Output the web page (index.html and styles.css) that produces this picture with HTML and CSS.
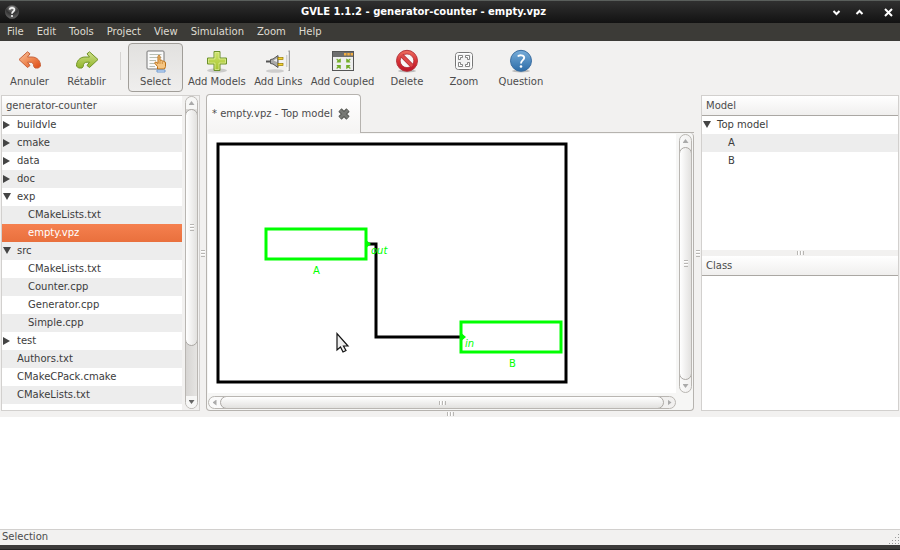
FILE: index.html
```html
<!DOCTYPE html>
<html lang="en">
<head>
<meta charset="utf-8">
<title>GVLE 1.1.2 - generator-counter - empty.vpz</title>
<link rel="stylesheet" href="styles.css">
</head>
<body>
<header class="titlebar">
  <svg class="app-icon" viewBox="0 0 16 16" aria-hidden="true">
    <defs><radialGradient id="orb" cx="50%" cy="15%" r="85%"><stop offset="0" stop-color="#999"/><stop offset="0.55" stop-color="#333"/><stop offset="1" stop-color="#666"/></radialGradient></defs>
    <circle cx="8" cy="8" r="6.6" fill="url(#orb)" stroke="#555" stroke-width=".6"/>
    <path d="M5.6 5.6C5.8 3.2 10.4 3.2 10.4 5.7C10.4 7.5 8.1 7.5 8 9.7" fill="none" stroke="#f2f2f2" stroke-width="1.7"/>
    <circle cx="8" cy="12" r="1.1" fill="#f2f2f2"/>
  </svg>
  <h1 class="title">GVLE 1.1.2 - generator-counter - empty.vpz</h1>
  <div class="window-buttons">
    <button class="window-button" aria-label="Minimize"><svg viewBox="0 0 9 9"><path d="M1.5 3L4.500 6L7.500 3" /></svg></button>
    <button class="window-button" aria-label="Maximize"><svg viewBox="0 0 9 9"><path d="M1.500 6L4.500 3L7.500 6" /></svg></button>
    <button class="window-button close" aria-label="Close"><svg viewBox="0 0 9 9"><path d="M1 1L8 8M8 1L1 8"/></svg></button>
  </div>
</header>

<nav class="menubar">
  <button>File</button><button>Edit</button><button>Tools</button><button>Project</button><button>View</button><button>Simulation</button><button>Zoom</button><button>Help</button>
</nav>

<div class="toolbar" role="toolbar">
  <button class="tool">
    <svg class="icon" viewBox="0 0 24 24"><defs><linearGradient id="undo" x2="1" y2="1"><stop offset="0" stop-color="#f7c4a0"/><stop offset=".5" stop-color="#ef8b55"/><stop offset="1" stop-color="#dd4814"/></linearGradient></defs>
      <path d="M1 10.500L9.500 2.800L12 4.800L9.500 8H14C19.500 8 22.700 12.500 22.500 17L20.500 19H17L15.800 17.500C15.600 14.500 14.500 13.200 12 13.200H9.500L12 16.500L9.500 18.500Z" fill="url(#undo)" stroke="#c8623a" stroke-linejoin="round"/></svg>
    <span>Annuler</span>
  </button>
  <button class="tool">
    <svg class="icon" viewBox="0 0 24 24"><defs><linearGradient id="redo" x2="0" y2="1"><stop offset="0" stop-color="#cfe08a"/><stop offset="1" stop-color="#91b52b"/></linearGradient></defs>
      <path d="M23 10.500L14.500 2.800L12 4.800L14.500 8H10C4.500 8 1.300 12.500 1.500 17L3.500 19H7L8.200 17.500C8.400 14.500 9.500 13.200 12 13.200H14.500L12 16.500L14.500 18.500Z" fill="url(#redo)" stroke="#719426" stroke-linejoin="round"/></svg>
    <span>Rétablir</span>
  </button>
  <span class="tool-separator"></span>
  <button class="tool pressed" aria-pressed="true">
    <svg class="icon" viewBox="0 0 24 24"><rect x="3" y="2" width="17" height="18" rx="1" fill="#fafafa" stroke="#777"/><path d="M5.500 5.500H17.500M5.500 8.500H17.500M5.500 11.500H12M5.500 14.500H11M5.500 17.500H11" stroke="#b7beb3" stroke-width="1.200"/>
      <path d="M13.500 20V17.500L11 14.500C10.300 12.800 12 12.500 14 14.500V7.500C14 6 16 6 16 7.500V11.500C17 10.800 18 11.200 18.300 12C19.400 11.500 20.100 12.300 20.200 13C21 12.500 21.600 13 21.500 14V17.500L20.500 20Z" fill="#f5c582" stroke="#b96e13"/><path d="M16 12V15M18.300 12.500V15" stroke="#b96e13" stroke-width=".6"/><path d="M13 21H21V23H13Z" fill="#dbeaff" stroke="#6e9ad0"/></svg>
    <span>Select</span>
  </button>
  <button class="tool">
    <svg class="icon" viewBox="0 0 24 24"><ellipse cx="12" cy="21.500" rx="10" ry="2.200" fill="#aaa" opacity=".55"/><defs><linearGradient id="plus" x2="0" y2="1"><stop offset="0" stop-color="#cee56b"/><stop offset="1" stop-color="#a5c32e"/></linearGradient></defs><path d="M9 2.500H15V9H21.500V15H15V21.500H9V15H2.500V9H9Z" fill="url(#plus)" stroke="#6b902b" stroke-linejoin="round"/><path d="M10 3.500H14V10H20.500V14H14V20.500H10V14H3.500V10H10Z" fill="none" stroke="#e1ee9e" stroke-width=".7"/></svg>
    <span>Add Models</span>
  </button>
  <button class="tool">
    <svg class="icon" viewBox="0 0 24 24"><ellipse cx="9" cy="22" rx="9" ry="1.800" fill="#aaa" opacity=".5"/><path d="M0 12.500H5" stroke="#555" stroke-width="2"/><path d="M4.500 10.500L7 10L12 6.500V18.500L7 15L4.500 14.500Z" fill="#aaa" stroke="#555"/><path d="M7.500 11.500L11 9.500V13Z" fill="#eee"/><rect x="12" y="8.500" width="5" height="2" fill="#f4d42e" stroke="#967900" stroke-width=".7"/><rect x="12" y="14.500" width="5" height="2" fill="#f4d42e" stroke="#967900" stroke-width=".7"/><path d="M21 6V18" stroke="#aaa"/><path d="M23.200 1.500V22" stroke="#999" stroke-width="1.500"/><path d="M22 3V21" stroke="#fff" stroke-width="1"/></svg>
    <span>Add Links</span>
  </button>
  <button class="tool">
    <svg class="icon" viewBox="0 0 24 24"><rect x="1.500" y="2.500" width="21" height="19" fill="#eee" stroke="#555"/><path d="M2 3H22V8H2Z" fill="#6e6e6e"/><path d="M13 4H15.500V6.500H13ZM16.300 4H18.800V6.500H16.300ZM19.600 4H22V6.500H19.600Z" fill="#f3ae41"/><g fill="#73ac28"><path d="M6 9.500L7.300 10.800L9.800 9.500V13.500H5.500L6.500 11.800L5.300 10.500ZM19 9.500L17.500 10.800L15.200 9.500V13.500H19.500L18.300 11.800L19.700 10.500Z"/><path d="M6 20L7.300 18.700L9.800 20V16H5.500L6.500 17.700L5.300 19ZM19 20L17.500 18.700L15.200 20V16H19.500L18.300 17.700L19.700 19Z"/></g></svg>
    <span>Add Coupled</span>
  </button>
  <button class="tool">
    <svg class="icon" viewBox="0 0 24 24"><defs><linearGradient id="stop" x2="0" y2="1"><stop offset="0" stop-color="#ed7061"/><stop offset=".5" stop-color="#d93336"/><stop offset="1" stop-color="#b91428"/></linearGradient></defs><ellipse cx="12" cy="22" rx="9" ry="1.500" fill="#bbb"/><circle cx="12" cy="11.800" r="10.500" fill="url(#stop)" stroke="#b5343b"/><circle cx="12" cy="11.800" r="6.800" fill="#f8f8f8" stroke="#a52a35" stroke-width=".7"/><path d="M6.800 6.600L17.200 17" stroke="#b52e38" stroke-width="4.200"/><path d="M6.800 6.600L17.200 17" stroke="#dc4a49" stroke-width="2.800"/></svg>
    <span>Delete</span>
  </button>
  <button class="tool">
    <svg class="icon" viewBox="0 0 24 24"><rect x="3.500" y="3.500" width="17" height="17" rx="3" fill="#f2f2f2" stroke="#777"/><rect x="4.500" y="4.500" width="15" height="15" rx="2" fill="none" stroke="#fff"/><g fill="#fff" stroke="#777" stroke-width=".9"><path d="M6.500 6.500H10.500V8.500H8.500V10.500H6.500ZM13.500 6.500H17.500V10.500H15.500V8.500H13.500Z"/><path d="M6.500 13.500H8.500V15.500H10.500V17.500H6.500ZM17.500 13.500H15.500V15.500H13.500V17.500H17.500Z"/></g></svg>
    <span>Zoom</span>
  </button>
  <button class="tool">
    <svg class="icon" viewBox="0 0 24 24"><defs><linearGradient id="help" x2="0" y2="1"><stop offset="0" stop-color="#78add9"/><stop offset="1" stop-color="#2c6ca8"/></linearGradient></defs><ellipse cx="12" cy="22" rx="9" ry="1.500" fill="#bbb"/><circle cx="12" cy="11.800" r="10.500" fill="url(#help)" stroke="#386ca0"/><path d="M8.800 7.500C10 5.900 15.200 5.600 15.200 8.800C15.200 11.200 12 11.200 12 14.500" fill="none" stroke="#fff" stroke-width="1.900"/><circle cx="12" cy="17.500" r="1.300" fill="#fff"/></svg>
    <span>Question</span>
  </button>
</div>

<main class="workspace">
  <section class="files">
    <div class="list">
      <h2 class="column-title">generator-counter</h2>
      <ul class="tree">
        <li class="closed">buildvle</li>
        <li class="closed">cmake</li>
        <li class="closed">data</li>
        <li class="closed">doc</li>
        <li class="open">exp</li>
        <li class="child">CMakeLists.txt</li>
        <li class="child selected">empty.vpz</li>
        <li class="open">src</li>
        <li class="child">CMakeLists.txt</li>
        <li class="child">Counter.cpp</li>
        <li class="child">Generator.cpp</li>
        <li class="child">Simple.cpp</li>
        <li class="closed">test</li>
        <li>Authors.txt</li>
        <li>CMakeCPack.cmake</li>
        <li>CMakeLists.txt</li>
      </ul>
    </div>
    <div class="scrollbar vertical files-scroll"><i class="arrow up"></i><div class="thumb"><i class="grip"></i></div><div class="trough"></div><i class="arrow down dark"></i></div>
  </section>
  <div class="handle"><i class="grip"></i></div>

  <section class="notebook">
    <div class="tabs">
      <div class="tab"><span>* empty.vpz - Top model</span>
        <button class="tab-close" aria-label="Close tab"><svg viewBox="0 0 14 14"><path d="M3 3L11 11M11 3L3 11" stroke="#555753" stroke-width="4.600"/><path d="M3 3L11 11M11 3L3 11" stroke="#777975" stroke-width="2.600"/></svg></button>
      </div>
      <div class="tab-rest"></div>
    </div>
    <div class="page">
      <div class="canvas">
        <svg width="468" height="259" viewBox="208 134 468 259">
          <g fill="none" stroke-width="3">
            <rect x="218" y="144" width="348" height="238" stroke="#000"/>
            <path d="M367 244H376V337H461" stroke="#000"/>
            <rect x="266" y="229" width="100" height="30" stroke="#0f0"/>
            <rect x="461" y="322" width="100" height="30" stroke="#0f0"/>
          </g>
          <path d="M366 240L371 244L366 248ZM460 332L466 337L460 342Z" fill="#0f0"/>
          <g class="labels"><text x="313" y="274">A</text><text x="509" y="367">B</text><text class="port" x="371" y="254">out</text><text class="port" x="465" y="347">in</text></g>
          <path d="M337 334V350.500L340.500 347L343.500 352.500L346.500 350.500L344 346.500L348 346Z" fill="#eee" stroke="#fff" stroke-width="3" opacity=".8"/>
          <path d="M337 333.500V350L340.500 347L343 352L346 350.500L343.500 346H348Z" fill="#eee" stroke="#111" stroke-width="1.200"/>
        </svg>
      </div>
      <div class="scrollbar vertical"><i class="arrow up"></i><div class="thumb"><i class="grip"></i></div><i class="arrow down"></i></div>
      <div class="scrollbar horizontal"><i class="arrow left"></i><div class="thumb"><i class="grip"></i></div><i class="arrow right"></i></div>
    </div>
  </section>
  <div class="handle"><i class="grip"></i></div>

  <aside class="models">
    <section class="model-list">
      <h2 class="column-title">Model</h2>
      <ul class="tree"><li class="open">Top model</li><li class="child">A</li><li class="child">B</li></ul>
    </section>
    <div class="handle row"><i class="grip"></i></div>
    <section class="class-list"><h2 class="column-title">Class</h2></section>
  </aside>
</main>
<div class="handle row"><i class="grip"></i></div>
<section class="console"></section>
<footer class="status"><span>Selection</span>
  <svg class="resize" viewBox="0 0 12 12"><path d="M10 1h1v1h-1zM7 4h1v1h-1zM10 4h1v1h-1zM4 7h1v1h-1zM7 7h1v1h-1zM10 7h1v1h-1zM1 10h1v1h-1zM4 10h1v1h-1zM7 10h1v1h-1zM10 10h1v1h-1z" fill="#999"/></svg>
</footer>
<div class="frame-bottom"></div>
</body>
</html>
```

FILE: styles.css
```css
* { box-sizing: border-box; }

body {
  margin: 0;
  min-height: 100vh;
  display: flex;
  flex-direction: column;
  background: #f2f1f0;
  color: #3c3c3c;
  font: 10px/18px "DejaVu Sans", sans-serif;
}

button {
  margin: 0;
  padding: 0;
  border: 0;
  background: none;
  color: inherit;
  font: inherit;
}

ul, h1, h2 { margin: 0; padding: 0; font: inherit; list-style: none; }
svg { display: block; }

.titlebar {
  display: grid;
  grid-template-columns: 30px 1fr 80px;
  align-items: center;
  height: 23px;
  padding: 0 7px 0 4px;
  border-top: 1px solid #5a5f5c;
  background: linear-gradient(#303030, #121212);
  color: #fff;
}
.app-icon { width: 16px; height: 16px; }
.title { text-align: center; font-weight: bold; }
.window-buttons { display: flex; justify-content: flex-end; align-items: center; gap: 14px; }
.window-button svg { width: 9px; height: 9px; fill: none; stroke: #fff; stroke-width: 2; }
.window-button.close { margin-left: 6px; }

.menubar {
  display: flex;
  gap: 13px;
  height: 18px;
  padding: 0 7px;
  background: #3c3b37;
  color: #dfdbd2;
}

.toolbar { display: flex; align-items: flex-start; height: 54px; padding: 2px 1px 0; }
.tool {
  min-width: 57px;
  padding: 4px 4px 0;
  height: 49px;
  border-radius: 4px;
  color: #4c4c4c;
}
.tool span { display: block; white-space: nowrap; }
.tool .icon { width: 24px; height: 24px; margin: 0 auto; }
.tool-separator { width: 1px; height: 28px; margin: 9px 7px 0 5px; background: #d5d3d1; }
.tool.pressed {
  min-width: 55px;
  margin-right: 1px;
  border: 1px solid #a19e99;
  background: linear-gradient(#e2e1df, #efeeed);
}

.workspace { display: grid; grid-template-columns: 200px 6px minmax(0, 1fr) 7px 199px; height: 316px; }

.files { display: flex; margin-left: 1px; border: 1px solid #d2d0ce; background: #f2f1f0; }
.list { flex: 1; background: #fff; margin-right: 3px; }
.column-title {
  height: 20px;
  padding-left: 4px;
  line-height: 20px;
  border-bottom: 1px solid #aaa7a3;
  background: linear-gradient(#fff, #f0efee);
  color: #4c4c4c;
}
.tree li { position: relative; height: 18px; padding-left: 15px; }
.tree li:nth-child(even) { background: #ededed; }
.tree li.child { padding-left: 26px; }
.tree li.selected { background: linear-gradient(#f5804f, #e9703d); color: #fff; }
.tree li.closed::before, .tree li.open::before {
  content: "";
  position: absolute;
  left: 1px;
  top: 5px;
  width: 7px;
  height: 8px;
  background: #444;
  clip-path: polygon(0 0, 100% 50%, 0 100%);
}
.tree li.open::before { width: 8px; height: 7px; clip-path: polygon(0 0, 100% 0, 50% 100%); }

.scrollbar {
  display: flex;
  border: 1px solid #b9b6b2;
  border-radius: 7px;
  background: linear-gradient(90deg, #fafafa, #f1f0ef);
  overflow: hidden;
}
.scrollbar.vertical { flex-direction: column; width: 13px; }
.scrollbar.horizontal { height: 13px; }
.arrow { flex: none; display: grid; place-items: center; width: 11px; height: 12px; }
.arrow::before { content: ""; width: 6px; height: 4px; background: #aaa; clip-path: polygon(50% 0, 100% 100%, 0 100%); }
.arrow.down::before { clip-path: polygon(0 0, 100% 0, 50% 100%); }
.arrow.dark::before { background: #666; }
.arrow.left::before { width: 4px; height: 6px; clip-path: polygon(100% 0, 100% 100%, 0 50%); }
.arrow.right::before { width: 4px; height: 6px; clip-path: polygon(0 0, 100% 50%, 0 100%); }
.thumb {
  flex: 1;
  display: grid;
  place-items: center;
  margin: 0 -1px;
  border: 1px solid #aaa7a3;
  border-radius: 7px;
  background: linear-gradient(90deg, #fff, #e2e1df);
}
.horizontal .thumb { margin: -1px 0; background: linear-gradient(#fff, #e2e1df); }
.horizontal .arrow { height: 11px; }
.files-scroll { margin: 0 1px 1px 0; background: linear-gradient(90deg, #d7d5d3, #e5e4e2); }
.files-scroll .arrow { background: #f7f7f6; }
.files-scroll .thumb { flex: 14; }
.files-scroll .trough { flex: 3; }

.grip {
  width: 4px;
  height: 7px;
  background: repeating-linear-gradient(#b8b6b3 0 1px, #fff 1px 2px, transparent 2px 3px);
}
.horizontal .grip, .row .grip {
  width: 7px;
  height: 4px;
  background: repeating-linear-gradient(90deg, #b8b6b3 0 1px, #fff 1px 2px, transparent 2px 3px);
}
.handle { display: grid; place-items: center; }
.handle.row { flex: none; height: 6px; }

.notebook { display: flex; flex-direction: column; margin-top: -1px; }
.tabs { display: flex; height: 39px; }
.tab {
  display: flex;
  align-items: center;
  gap: 4px;
  padding: 0 9px 0 5px;
  border: 1px solid #b6b3af;
  border-bottom: 0;
  border-radius: 4px 4px 0 0;
  background: linear-gradient(#fff, #f5f4f3);
  color: #4c4c4c;
  white-space: nowrap;
}
.tab-close svg { width: 14px; height: 14px; }
.tab-rest { flex: 1; border-bottom: 1px solid #b6b3af; }
.page {
  flex: 1;
  display: grid;
  grid-template-columns: minmax(0, 1fr) 13px;
  grid-template-rows: minmax(0, 1fr) 13px;
  gap: 3px;
  padding: 1px;
  border: 1px solid #b6b3af;
  border-top: 0;
  border-radius: 0 4px 4px 4px;
  background: #f6f6f5;
}
.canvas { background: #fff; overflow: hidden; }
.labels { fill: #0f0; font-size: 10px; }
.port { font-style: italic; }

.models { display: flex; flex-direction: column; margin-right: 1px; border: 1px solid #d2d0ce; }
.model-list { flex: 154; background: #fff; }
.class-list { flex: 154; background: #fff; }

.console { flex: 1; background: #fff; }
.status {
  display: flex;
  justify-content: space-between;
  align-items: flex-end;
  height: 16px;
  padding-left: 2px;
  border-top: 1px solid #d2d0ce;
  line-height: 16px;
  color: #4c4c4c;
}
.resize { width: 12px; height: 12px; }
.frame-bottom { height: 5px; border-bottom: 1px solid #222; background: #3c3b3a; }
```
